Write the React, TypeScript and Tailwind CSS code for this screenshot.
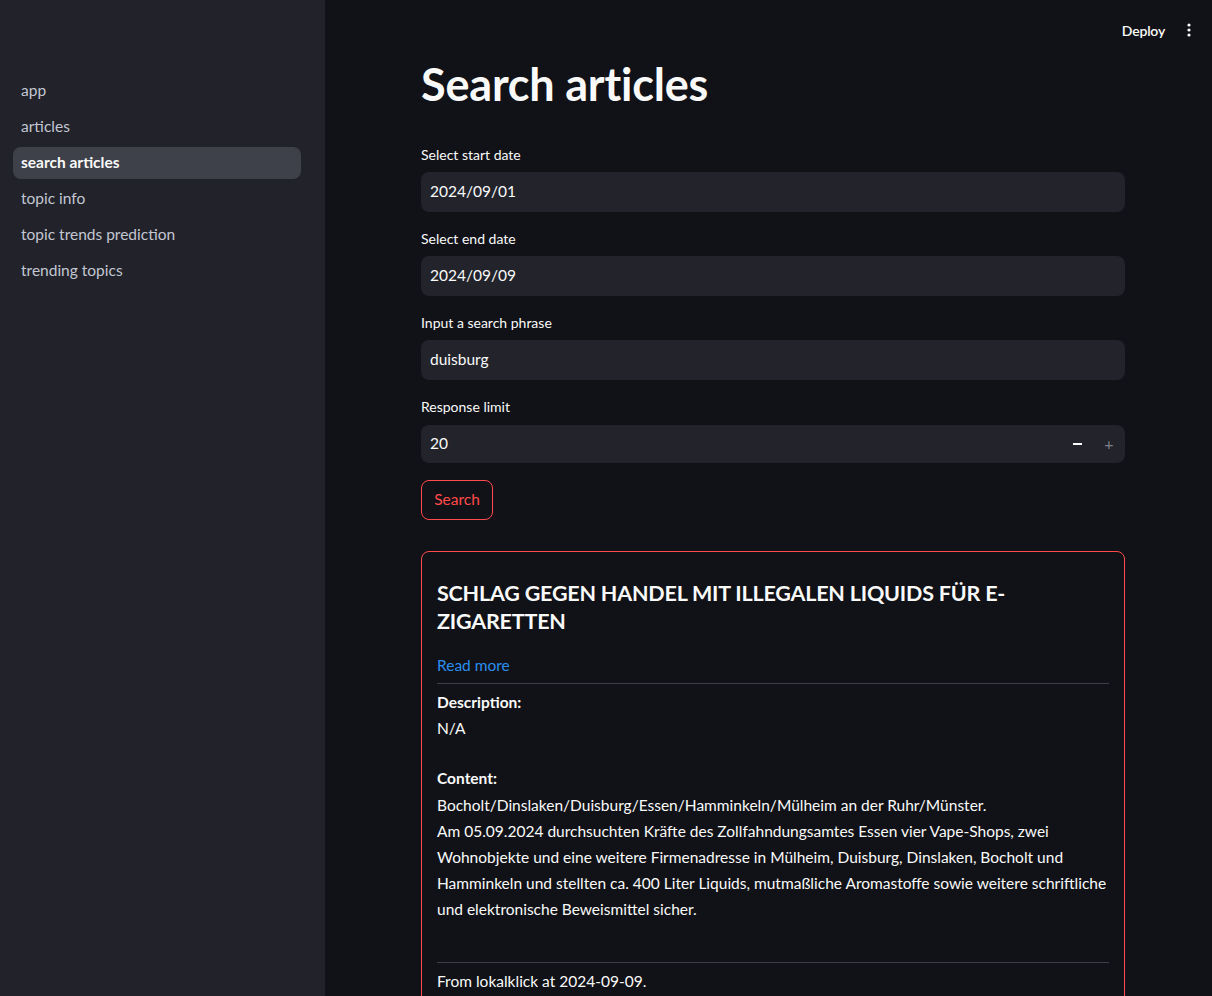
import React from "react";

const font = { fontFamily: '"Lato", "Noto Sans", sans-serif' };

function Field({ label, value }: { label: string; value: string }) {
  return (
    <div className="flex flex-col">
      <div className="text-[14px] text-[#fafafa] h-[22px] leading-[22px] mb-[6px]">{label}</div>
      <div className="h-[40px] rounded-[8px] bg-[#22232b] flex items-center px-[9px] text-[15.5px] text-[#fafafa]">{value}</div>
    </div>
  );
}

export default function App() {
  const nav = ["app", "articles", "search articles", "topic info", "topic trends prediction", "trending topics"];
  return (
    <div className="flex w-[1212px] h-[996px] overflow-hidden bg-[#111217]" style={font}>
      <aside className="w-[325px] shrink-0 bg-[#21222a] pt-[75px] px-[13px]">
        <nav className="flex flex-col gap-[4px] w-[288px]">
          {nav.map((n) => (
            <div
              key={n}
              className={
                "h-[32px] rounded-[8px] flex items-center px-[8px] text-[15.5px] " +
                (n === "search articles" ? "bg-[#3f414a] text-[#fafafa] font-bold" : "text-[#c3c7d2]")
              }
            >
              {n}
            </div>
          ))}
        </nav>
      </aside>
      <main className="flex-1 min-w-0 overflow-hidden">
        <header className="h-[60px] flex items-center justify-end pr-[16px] gap-[22px]">
          <span className="text-[14px] font-semibold text-[#fafafa] tracking-[-0.2px]">Deploy</span>
          <svg width="4" height="14" viewBox="0 0 4 14" className="mr-[5px]">
            <circle cx="2" cy="2" r="1.6" fill="#fafafa" />
            <circle cx="2" cy="7" r="1.6" fill="#fafafa" />
            <circle cx="2" cy="12" r="1.6" fill="#fafafa" />
          </svg>
        </header>
        <div className="w-[704px] ml-[96px] flex flex-col">
          <h1 className="text-[45px] font-bold text-[#fafafa] leading-[52px] mt-[-2px] tracking-[-0.2px]">Search articles</h1>
          <div className="flex flex-col gap-[16px] mt-[34px]">
            <Field label="Select start date" value="2024/09/01" />
            <Field label="Select end date" value="2024/09/09" />
            <Field label="Input a search phrase" value="duisburg" />
            <div className="flex flex-col">
              <div className="text-[14px] text-[#fafafa] h-[22px] leading-[22px] mb-[7px]">Response limit</div>
              <div className="h-[38px] rounded-[8px] bg-[#22232b] flex items-center pl-[9px] text-[15.5px] text-[#fafafa]">
                <span className="flex-1">20</span>
                <span className="w-[32px] flex justify-center">
                  <span className="block w-[9px] h-[2px] bg-[#fafafa]" />
                </span>
                <span className="w-[32px] flex justify-center text-[#7d7f88] text-[16px]">+</span>
              </div>
            </div>
          </div>
          <button className="mt-[17px] w-[72px] h-[40px] rounded-[8px] border border-[#ff4b4b] text-[#ff4b4b] text-[15.5px] flex items-center justify-center">
            Search
          </button>
          <div className="mt-[31px] border border-[#ff4b4b] rounded-[8px] px-[15px] pt-[27px] pb-[8px] text-[#fafafa]">
            <h2 className="text-[21.5px] font-bold leading-[28px] tracking-[-0.2px]">
              SCHLAG GEGEN HANDEL MIT ILLEGALEN LIQUIDS FÜR E-ZIGARETTEN
            </h2>
            <a className="block mt-[17px] text-[15.5px] text-[#2b8ef0] leading-[26px]">Read more</a>
            <div className="h-px bg-[#3d3f46] mt-[5px]" />
            <div className="text-[15.5px] leading-[25.5px] mt-[6px]">
              <div className="font-bold">Description:</div>
              <div>N/A</div>
              <div className="h-[25px]" />
              <div className="font-bold">Content:</div>
              <div className="leading-[26px]">
                Bocholt/Dinslaken/Duisburg/Essen/Hamminkeln/Mülheim an der Ruhr/Münster.
                <br />
                Am 05.09.2024 durchsuchten Kräfte des Zollfahndungsamtes Essen vier Vape-Shops, zwei Wohnobjekte und eine weitere Firmenadresse in Mülheim, Duisburg, Dinslaken, Bocholt und Hamminkeln und stellten ca. 400 Liter Liquids, mutmaßliche Aromastoffe sowie weitere schriftliche und elektronische Beweismittel sicher.
              </div>
            </div>
            <div className="h-px bg-[#3d3f46] mt-[40px]" />
            <div className="text-[15.5px] leading-[26px] mt-[5px] pb-[12px]">From lokalklick at 2024-09-09.</div>
          </div>
        </div>
      </main>
    </div>
  );
}
